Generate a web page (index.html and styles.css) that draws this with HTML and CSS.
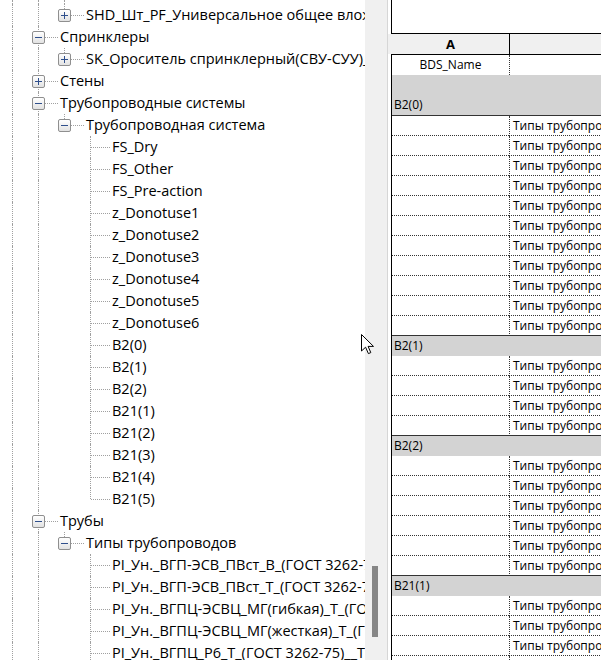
FILE: index.html
```
<!DOCTYPE html>
<html lang="ru">
  <head>
    <meta charset="UTF-8" />
    <title>Диспетчер проекта</title>
    <link rel="stylesheet" href="styles.css">
  </head>
  <body>
    <div class="tree">
      <div class="row stub"><span class="g l"></span><span class="g l"></span><span class="g l"></span></div>
      <div class="row"><span class="g l"></span><span class="g l"></span><span class="c end"><i class="box plus"></i></span><span class="t">SHD_Шт_PF_Универсальное общее вложение</span></div>
      <div class="row"><span class="g l"></span><span class="c mid"><i class="box"></i></span><span class="t">Спринклеры</span></div>
      <div class="row"><span class="g l"></span><span class="g l"></span><span class="c end"><i class="box plus"></i></span><span class="t">SK_Ороситель спринклерный(СВУ-СУУ)_Универсальный</span></div>
      <div class="row"><span class="g l"></span><span class="c mid"><i class="box plus"></i></span><span class="t">Стены</span></div>
      <div class="row"><span class="g l"></span><span class="c mid"><i class="box"></i></span><span class="t">Трубопроводные системы</span></div>
      <div class="row"><span class="g l"></span><span class="g l"></span><span class="c end"><i class="box"></i></span><span class="t">Трубопроводная система</span></div>
      <div class="row"><span class="g l"></span><span class="g l"></span><span class="g"></span><span class="c mid"></span><span class="t">FS_Dry</span></div>
      <div class="row"><span class="g l"></span><span class="g l"></span><span class="g"></span><span class="c mid"></span><span class="t">FS_Other</span></div>
      <div class="row"><span class="g l"></span><span class="g l"></span><span class="g"></span><span class="c mid"></span><span class="t">FS_Pre-action</span></div>
      <div class="row"><span class="g l"></span><span class="g l"></span><span class="g"></span><span class="c mid"></span><span class="t">z_Donotuse1</span></div>
      <div class="row"><span class="g l"></span><span class="g l"></span><span class="g"></span><span class="c mid"></span><span class="t">z_Donotuse2</span></div>
      <div class="row"><span class="g l"></span><span class="g l"></span><span class="g"></span><span class="c mid"></span><span class="t">z_Donotuse3</span></div>
      <div class="row"><span class="g l"></span><span class="g l"></span><span class="g"></span><span class="c mid"></span><span class="t">z_Donotuse4</span></div>
      <div class="row"><span class="g l"></span><span class="g l"></span><span class="g"></span><span class="c mid"></span><span class="t">z_Donotuse5</span></div>
      <div class="row"><span class="g l"></span><span class="g l"></span><span class="g"></span><span class="c mid"></span><span class="t">z_Donotuse6</span></div>
      <div class="row"><span class="g l"></span><span class="g l"></span><span class="g"></span><span class="c mid"></span><span class="t">B2(0)</span></div>
      <div class="row"><span class="g l"></span><span class="g l"></span><span class="g"></span><span class="c mid"></span><span class="t">B2(1)</span></div>
      <div class="row"><span class="g l"></span><span class="g l"></span><span class="g"></span><span class="c mid"></span><span class="t">B2(2)</span></div>
      <div class="row"><span class="g l"></span><span class="g l"></span><span class="g"></span><span class="c mid"></span><span class="t">B21(1)</span></div>
      <div class="row"><span class="g l"></span><span class="g l"></span><span class="g"></span><span class="c mid"></span><span class="t">B21(2)</span></div>
      <div class="row"><span class="g l"></span><span class="g l"></span><span class="g"></span><span class="c mid"></span><span class="t">B21(3)</span></div>
      <div class="row"><span class="g l"></span><span class="g l"></span><span class="g"></span><span class="c mid"></span><span class="t">B21(4)</span></div>
      <div class="row"><span class="g l"></span><span class="g l"></span><span class="g"></span><span class="c end"></span><span class="t">B21(5)</span></div>
      <div class="row"><span class="g l"></span><span class="c mid"><i class="box"></i></span><span class="t">Трубы</span></div>
      <div class="row"><span class="g l"></span><span class="g l"></span><span class="c end"><i class="box"></i></span><span class="t">Типы трубопроводов</span></div>
      <div class="row"><span class="g l"></span><span class="g l"></span><span class="g"></span><span class="c mid"></span><span class="t">PI_Ун._ВГП-ЭСВ_ПВст_В_(ГОСТ 3262-75)</span></div>
      <div class="row"><span class="g l"></span><span class="g l"></span><span class="g"></span><span class="c mid"></span><span class="t">PI_Ун._ВГП-ЭСВ_ПВст_Т_(ГОСТ 3262-75)</span></div>
      <div class="row"><span class="g l"></span><span class="g l"></span><span class="g"></span><span class="c mid"></span><span class="t">PI_Ун._ВГПЦ-ЭСВЦ_МГ(гибкая)_Т_(ГОСТ 3262-75)</span></div>
      <div class="row"><span class="g l"></span><span class="g l"></span><span class="g"></span><span class="c mid"></span><span class="t">PI_Ун._ВГПЦ-ЭСВЦ_МГ(жесткая)_Т_(ГОСТ 3262-75)</span></div>
      <div class="row"><span class="g l"></span><span class="g l"></span><span class="g"></span><span class="c mid"></span><span class="t">PI_Ун._ВГПЦ_Р6_Т_(ГОСТ 3262-75)__Трубы</span></div>
    </div>

    <div class="scroll"><div class="thumb"></div></div>
    <div class="split"></div>

    <div class="sheet">
      <div class="title"></div>
      <div class="colhead"><span>A</span><span></span></div>
      <div class="tbl">
        <div class="r field"><span>BDS_Name</span><span></span></div>

        <div class="band first">B2(0)</div>
        <div class="r"><span></span><span>Типы трубопроводов</span></div>
        <div class="r"><span></span><span>Типы трубопроводов</span></div>
        <div class="r"><span></span><span>Типы трубопроводов</span></div>
        <div class="r"><span></span><span>Типы трубопроводов</span></div>
        <div class="r"><span></span><span>Типы трубопроводов</span></div>
        <div class="r"><span></span><span>Типы трубопроводов</span></div>
        <div class="r"><span></span><span>Типы трубопроводов</span></div>
        <div class="r"><span></span><span>Типы трубопроводов</span></div>
        <div class="r"><span></span><span>Типы трубопроводов</span></div>
        <div class="r"><span></span><span>Типы трубопроводов</span></div>
        <div class="r last"><span></span><span>Типы трубопроводов</span></div>

        <div class="band">B2(1)</div>
        <div class="r"><span></span><span>Типы трубопроводов</span></div>
        <div class="r"><span></span><span>Типы трубопроводов</span></div>
        <div class="r"><span></span><span>Типы трубопроводов</span></div>
        <div class="r last"><span></span><span>Типы трубопроводов</span></div>

        <div class="band">B2(2)</div>
        <div class="r"><span></span><span>Типы трубопроводов</span></div>
        <div class="r"><span></span><span>Типы трубопроводов</span></div>
        <div class="r"><span></span><span>Типы трубопроводов</span></div>
        <div class="r"><span></span><span>Типы трубопроводов</span></div>
        <div class="r"><span></span><span>Типы трубопроводов</span></div>
        <div class="r last"><span></span><span>Типы трубопроводов</span></div>

        <div class="band">B21(1)</div>
        <div class="r"><span></span><span>Типы трубопроводов</span></div>
        <div class="r"><span></span><span>Типы трубопроводов</span></div>
        <div class="r"><span></span><span>Типы трубопроводов</span></div>
        <div class="r"><span></span><span>Типы трубопроводов</span></div>
      </div>
    </div>

    <!-- mouse pointer -->
    <svg class="cursor" width="14" height="22" viewBox="0 0 14 22">
      <path d="M0.5 0.5 V17 L4.6 13.2 L7.4 19.6 L9.8 18.6 L7.1 12.4 H12.5 Z" fill="#fff" stroke="#000" stroke-linejoin="miter" />
    </svg>
  </body>
</html>
```

FILE: styles.css
```
* {
  box-sizing: border-box;
  margin: 0;
  padding: 0;
}

body {
  position: relative;
  display: flex;
  height: 660px;
  overflow: hidden;
  background-color: #fff;
  font-family: "Open Sans", "Noto Sans", sans-serif;
  color: #000;
}

/* project browser tree */

.tree {
  width: 365px;
  flex: none;
  overflow: hidden;
  font-size: 14.5px;
}

.row {
  display: flex;
  align-items: center;
  height: 22px;
  white-space: nowrap;
}

.row.stub {
  height: 4px;
  align-items: stretch;
}

.g,
.c {
  position: relative;
  width: 26px;
  height: 100%;
  flex: none;
}

.g.l::before,
.c::before {
  content: "";
  position: absolute;
  left: 12px;
  top: 0;
  bottom: 0;
  border-left: 1px dotted #a0a0a0;
}

.c.end::before {
  bottom: auto;
  height: 11px;
}

.c::after {
  content: "";
  position: absolute;
  left: 13px;
  top: 11px;
  width: 19px;
  border-top: 1px dotted #a0a0a0;
}

.box {
  position: absolute;
  z-index: 1;
  left: 6px;
  top: 5px;
  width: 13px;
  height: 13px;
  border: 1px solid #8f8f8f;
  border-radius: 2px;
  background: linear-gradient(#ffffff, #e2e2e2);
}

.box::before {
  content: "";
  position: absolute;
  left: 2px;
  right: 2px;
  top: 5px;
  height: 1px;
  background-color: #2f4f8c;
}

.box.plus::after {
  content: "";
  position: absolute;
  top: 2px;
  bottom: 2px;
  left: 5px;
  width: 1px;
  background-color: #2f4f8c;
}

.t {
  margin-left: 8px;
  line-height: 22px;
}

/* scrollbar + splitter */

.scroll {
  width: 22px;
  flex: none;
  padding-top: 566px;
  background-color: #f0f0f0;
}

.thumb {
  width: 6px;
  height: 71px;
  margin-left: 7px;
  background-color: #868686;
}

.split {
  width: 1px;
  flex: none;
  background-color: #d6d6d6;
}

/* schedule */

.sheet {
  flex: 1;
  overflow: hidden;
  font-size: 12px;
  white-space: nowrap;
}

.title {
  height: 34px;
  margin-left: 3px;
  border-left: 1px solid #000;
  border-bottom: 1px solid #000;
}

.colhead {
  display: grid;
  grid-template-columns: 117px 1fr;
  height: 20px;
  padding-left: 4px;
  background-color: #f0f0f0;
  font-weight: bold;
  font-size: 13px;
  line-height: 20px;
  text-align: center;
}

.colhead span + span {
  border-left: 1px solid #000;
}

.tbl {
  margin-left: 3px;
  border-left: 1px solid #000;
  border-top: 1px solid #000;
}

.r {
  display: grid;
  grid-template-columns: 117px 1fr;
  height: 20px;
  line-height: 19px;
}

.r span {
  border-bottom: 1px dotted #333;
}

.r span + span {
  border-left: 1px dotted #333;
  padding-left: 3px;
}

.r.field span {
  border-bottom: none;
  text-align: center;
}

.r.last span {
  border-bottom: 1px solid #333;
}

.band {
  height: 20px;
  padding-left: 2px;
  line-height: 20px;
  background-color: #d3d3d3;
}

.band.first {
  height: 41px;
  padding-top: 20px;
  border-bottom: 1px solid #333;
}

.cursor {
  position: absolute;
  left: 361px;
  top: 334px;
}
```
